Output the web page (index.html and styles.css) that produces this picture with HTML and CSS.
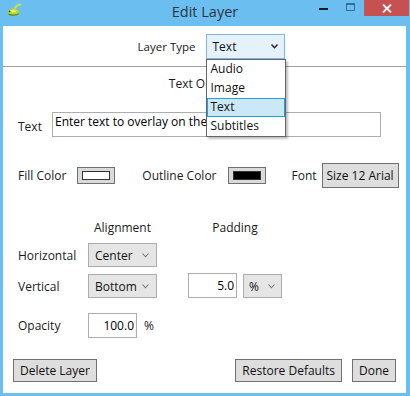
FILE: index.html
```html
<!DOCTYPE html>
<html lang="en">
<head>
    <meta charset="UTF-8">
    <title>Edit Layer</title>
    <link rel="stylesheet" href="styles.css">
</head>
<body>
<div class="window">
    <div class="titlebar">
        <div class="app-icon">
            <svg width="16" height="14" viewBox="0 0 16 14">
                <path d="M9 5 C10 3 12 1.5 14.5 1.5" stroke="#c9e24c" stroke-width="2" fill="none" stroke-linecap="round"/>
                <ellipse cx="7.5" cy="9" rx="5.8" ry="3.4" fill="#b4d629"/>
                <ellipse cx="7" cy="8" rx="3.5" ry="1.6" fill="#dcef6a"/>
                <path d="M2.5 11 C5 12.6 10 12.6 12.8 10.6" stroke="#5f850c" stroke-width="1.1" fill="none"/>
                <circle cx="3.6" cy="8.4" r="0.9" fill="#2f4a06"/>
            </svg>
        </div>
        <div class="title">Edit Layer</div>
        <div class="controls">
            <span class="ctl-min"></span>
            <span class="ctl-max"></span>
            <span class="ctl-close">
                <svg width="10" height="9" viewBox="0 0 10 9"><path d="M1 0.5 L9 8.5 M9 0.5 L1 8.5" stroke="#fff" stroke-width="1.8"/></svg>
            </span>
        </div>
    </div>

    <div class="client">
        <div class="type-row">
            <div class="type-label">Layer Type</div>
            <div class="type-cell">
                <div class="combo combo-focus">
                    <span>Text</span>
                    <svg class="chev" width="7" height="5" viewBox="0 0 7 5"><path d="M0.5 0.5 L3.5 3.8 L6.5 0.5" stroke="#222" stroke-width="1.4" fill="none"/></svg>
                </div>
                <ul class="dropdown">
                    <li>Audio</li>
                    <li>Image</li>
                    <li class="picked">Text</li>
                    <li>Subtitles</li>
                </ul>
            </div>
        </div>

        <div class="section-title">Text Options</div>

        <div class="text-row">
            <div class="lbl">Text</div>
            <div class="textbox">Enter text to overlay on the video</div>
        </div>

        <div class="color-row">
            <div class="lbl">Fill Color</div>
            <div class="swatch"><span class="swatch-in white"></span></div>
            <div class="lbl outline-lbl">Outline Color</div>
            <div class="swatch"><span class="swatch-in black"></span></div>
            <div class="lbl font-lbl">Font</div>
            <div class="btn font-btn">Size 12 Arial</div>
        </div>

        <div class="grid">
            <div></div>
            <div class="head head-align">Alignment</div>
            <div class="head">Padding</div>

            <div class="lbl">Horizontal</div>
            <div class="combo">
                <span>Center</span>
                <svg class="chev" width="7" height="5" viewBox="0 0 7 5"><path d="M0.5 0.5 L3.5 3.8 L6.5 0.5" stroke="#777" stroke-width="1.1" fill="none"/></svg>
            </div>
            <div></div>

            <div class="lbl">Vertical</div>
            <div class="combo">
                <span>Bottom</span>
                <svg class="chev" width="7" height="5" viewBox="0 0 7 5"><path d="M0.5 0.5 L3.5 3.8 L6.5 0.5" stroke="#777" stroke-width="1.1" fill="none"/></svg>
            </div>
            <div class="pad-cell">
                <div class="numbox">5.0</div>
                <div class="combo combo-small">
                    <span>%</span>
                    <svg class="chev" width="7" height="5" viewBox="0 0 7 5"><path d="M0.5 0.5 L3.5 3.8 L6.5 0.5" stroke="#777" stroke-width="1.1" fill="none"/></svg>
                </div>
            </div>
        </div>

        <div class="opacity-row">
            <div class="lbl">Opacity</div>
            <div class="numbox">100.0</div>
            <div class="pct">%</div>
        </div>

        <div class="button-row">
            <div class="btn">Delete Layer</div>
            <div class="spacer"></div>
            <div class="btn">Restore Defaults</div>
            <div class="btn">Done</div>
        </div>
    </div>
</div>
</body>
</html>
```

FILE: styles.css
```css
body, html{
    margin: 0;
    padding: 0;
    width: 100%;
    height: 100%;
    font-family: "Open Sans", "Noto Sans", sans-serif;
    font-size: 11.5px;
    color: #1a1a1a;
}
.window{
    width: 410px;
    height: 396px;
    background: #6bbff0;
    display: flex;
    flex-direction: column;
    box-sizing: border-box;
    padding: 0 3px 3px 3px;
}

/* title bar */
.titlebar{
    height: 26px;
    display: grid;
    grid-template-columns: 1fr auto 1fr;
    align-items: start;
}
.app-icon{
    padding: 3px 0 0 3px;
}
.title{
    font-size: 14.5px;
    color: #2d3440;
    line-height: 24px;
}
.controls{
    display: flex;
    justify-content: flex-end;
    align-items: flex-start;
}
.ctl-min{
    width: 9px;
    height: 2px;
    background: #1c1c1c;
    margin: 8px 18px 0 0;
}
.ctl-max{
    width: 7px;
    height: 5px;
    border: 1px solid #3a6d94;
    border-top-width: 2px;
    margin: 3px 9px 0 0;
}
.ctl-close{
    width: 45px;
    height: 16px;
    background: #c75050;
    display: flex;
    align-items: center;
    justify-content: center;
    margin-right: -2px;
}

/* client area */
.client{
    flex: 1;
    background: #fff;
    display: flex;
    flex-direction: column;
    margin-right: 1px;
}
.type-row{
    height: 41px;
    box-sizing: border-box;
    border-bottom: 1px solid #a0a0a0;
    display: grid;
    grid-template-columns: 1fr 1fr;
    align-items: center;
}
.type-label{
    text-align: right;
    padding-right: 9px;
}
.type-cell{
    position: relative;
    padding-left: 1px;
}
.combo{
    height: 24px;
    width: 69px;
    box-sizing: border-box;
    border: 1px solid #acacac;
    background: #e5e5e5;
    display: flex;
    align-items: center;
    justify-content: space-between;
    padding: 0 7px 0 6px;
    font-size: 12px;
    color: #111;
}
.combo-focus{
    width: 79px;
    height: 25px;
    background: #e5f1fb;
    border-color: #7eb4ea;
    padding-right: 6px;
}
.combo-small{
    width: 39px;
    padding: 0 6px 0 5px;
}
.chev{
    display: block;
}
.dropdown{
    position: absolute;
    left: 1px;
    top: 25px;
    width: 80px;
    margin: 0;
    padding: 0;
    list-style: none;
    background: #fff;
    border: 1px solid #646464;
    box-shadow: 2px 2px 2px rgba(0, 0, 0, 0.25);
    box-sizing: border-box;
    font-size: 12px;
    color: #111;
}
.dropdown li{
    height: 19px;
    box-sizing: border-box;
    line-height: 16px;
    padding: 0 3px;
    border: 1px solid transparent;
}
.dropdown li.picked{
    background: #cbe8f6;
    border-color: #26a0da;
}
.section-title{
    text-align: center;
    margin-top: 8px;
    line-height: 18px;
    font-size: 12px;
}
.lbl{
    font-size: 12px;
    white-space: nowrap;
}
.text-row{
    display: flex;
    align-items: center;
    margin-top: 19px;
    padding-left: 15px;
}
.text-row .lbl{
    width: 34px;
    padding-top: 3px;
}
.textbox{
    width: 329px;
    height: 25px;
    box-sizing: border-box;
    border: 1px solid #abadb3;
    padding: 0 2px;
    line-height: 18px;
    font-size: 12px;
    color: #000;
    white-space: nowrap;
    overflow: hidden;
}
.color-row{
    display: flex;
    align-items: center;
    margin-top: 26px;
    padding-left: 15px;
}
.swatch{
    width: 38px;
    height: 17px;
    box-sizing: border-box;
    border: 1px solid #707070;
    background: #dadada;
    display: flex;
    align-items: center;
    justify-content: center;
    margin-left: 11px;
}
.swatch-in{
    width: 28px;
    height: 9px;
    box-sizing: border-box;
    border: 1px solid #333;
}
.swatch-in.white{
    background: #fff;
}
.swatch-in.black{
    background: #000;
}
.outline-lbl{
    margin-left: 27px;
}
.font-lbl{
    margin-left: 26px;
}
.btn{
    height: 23px;
    box-sizing: border-box;
    border: 1px solid #707070;
    background: #dedede;
    padding: 0 6px;
    display: flex;
    align-items: center;
    font-size: 12px;
    color: #111;
    white-space: nowrap;
}
.font-btn{
    height: 25px;
    width: 77px;
    margin-left: 5px;
    justify-content: center;
}
.grid{
    display: grid;
    grid-template-columns: 70px 100px 94px;
    grid-template-rows: 18px 24px 24px;
    row-gap: 7px;
    margin-top: 30px;
    padding-left: 15px;
    align-items: center;
}
.grid .lbl{
    padding-top: 1px;
}
.head{
    font-size: 12px;
    text-align: center;
    margin-bottom: -1px;
}
.head-align{
    width: 69px;
}
.pad-cell{
    display: flex;
    gap: 6px;
}
.numbox{
    width: 49px;
    height: 25px;
    box-sizing: border-box;
    border: 1px solid #abadb3;
    text-align: right;
    padding-right: 2px;
    line-height: 23px;
    font-size: 12px;
    color: #000;
}
.pad-cell .numbox{
    height: 25px;
    margin-top: -1px;
}
.opacity-row{
    display: flex;
    align-items: center;
    margin-top: 15px;
    padding-left: 15px;
}
.opacity-row .lbl{
    width: 70px;
}
.pct{
    margin-left: 7px;
    font-size: 12px;
}
.button-row{
    display: flex;
    margin-top: 21px;
    padding: 0 10px 0 10px;
    gap: 10px;
}
.spacer{
    flex: 1;
}
```
